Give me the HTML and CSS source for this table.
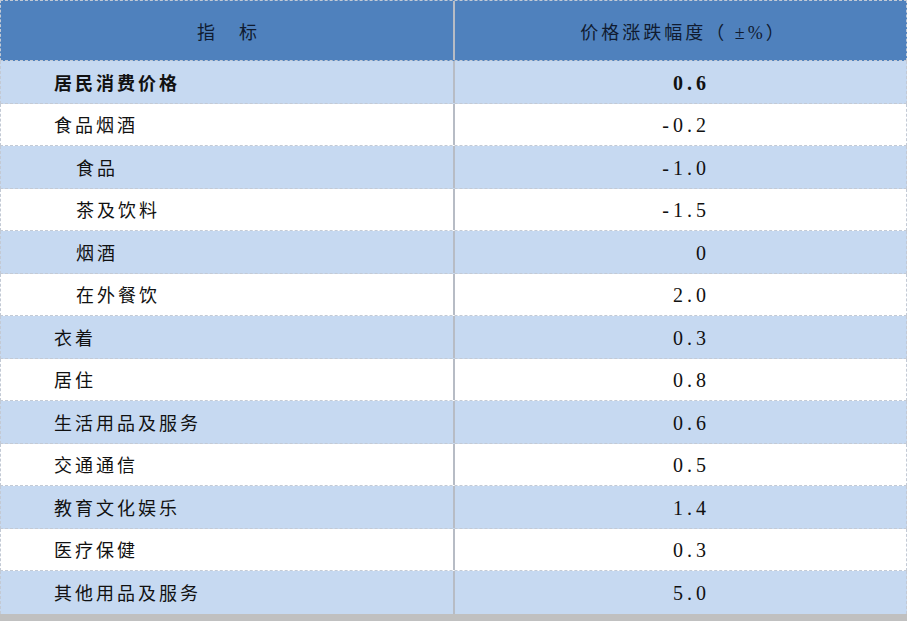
FILE: index.html
```html
<!DOCTYPE html>
<html lang="zh-CN">
<head>
<meta charset="utf-8">
<title>居民消费价格</title>
<link rel="stylesheet" href="styles.css">
</head>
<body>
<div class="table">
  <div class="row head">
    <div class="name">指　标</div>
    <div class="val">价格涨跌幅度（ ±%）</div>
  </div>
  <div class="row alt total">
    <div class="name l1">居民消费价格</div>
    <div class="val">0.6</div>
  </div>
  <div class="row">
    <div class="name l1">食品烟酒</div>
    <div class="val">-0.2</div>
  </div>
  <div class="row alt">
    <div class="name l2">食品</div>
    <div class="val">-1.0</div>
  </div>
  <div class="row">
    <div class="name l2">茶及饮料</div>
    <div class="val">-1.5</div>
  </div>
  <div class="row alt">
    <div class="name l2">烟酒</div>
    <div class="val">0</div>
  </div>
  <div class="row">
    <div class="name l2">在外餐饮</div>
    <div class="val">2.0</div>
  </div>
  <div class="row alt">
    <div class="name l1">衣着</div>
    <div class="val">0.3</div>
  </div>
  <div class="row">
    <div class="name l1">居住</div>
    <div class="val">0.8</div>
  </div>
  <div class="row alt">
    <div class="name l1">生活用品及服务</div>
    <div class="val">0.6</div>
  </div>
  <div class="row">
    <div class="name l1">交通通信</div>
    <div class="val">0.5</div>
  </div>
  <div class="row alt">
    <div class="name l1">教育文化娱乐</div>
    <div class="val">1.4</div>
  </div>
  <div class="row">
    <div class="name l1">医疗保健</div>
    <div class="val">0.3</div>
  </div>
  <div class="row alt last">
    <div class="name l1">其他用品及服务</div>
    <div class="val">5.0</div>
  </div>
</div>
</body>
</html>
```

FILE: styles.css
```css
html {
  background: #c0c0c0;
}
body {
  margin: 0;
  background: #c0c0c0;
  font-family: "Liberation Serif", "Noto Sans CJK SC", serif;
  font-size: 18px;
  color: #111;
}
.table {
  width: 907px;
  display: flex;
  flex-direction: column;
}
.row {
  display: flex;
  height: 42.5px;
  box-sizing: border-box;
  background: #ffffff;
  border-bottom: 1px dashed #c3cad5;
  border-left: 1px dashed #c3cad5;
  border-right: 1px dashed #c3cad5;
}
.row.alt {
  background: #c6d9f1;
}
.row.last {
  border-bottom: none;
}
.row.head {
  height: 61px;
  background: #4f81bd;
  border-top: 1px dashed #c3cad5;
  color: #101b30;
}
.name {
  width: 454px;
  box-sizing: border-box;
  flex: none;
  border-right: 2px solid #b7bcc5;
  display: flex;
  align-items: center;
  letter-spacing: 3px;
}
.val {
  flex: 1;
  box-sizing: border-box;
  display: flex;
  align-items: center;
  justify-content: flex-end;
  padding-right: 196px;
  padding-top: 3px;
  letter-spacing: 4px;
  font-size: 20px;
}
.head .name {
  justify-content: center;
  padding-left: 3px;
}
.head .val {
  justify-content: center;
  padding-right: 0;
  padding-top: 0;
  padding-left: 6px;
  letter-spacing: 3px;
  font-size: 18px;
}
.l1 {
  padding-left: 53px;
}
.l2 {
  padding-left: 75px;
}
.total {
  font-weight: bold;
}
```
